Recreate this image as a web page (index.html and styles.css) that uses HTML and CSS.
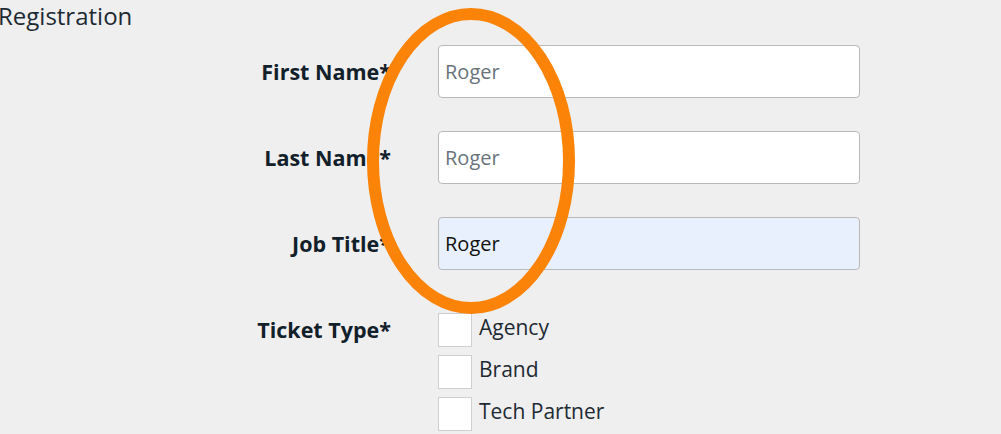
FILE: index.html
```html
<!DOCTYPE html>
<html>
<head>
<meta charset="utf-8">
<link rel="stylesheet" href="styles.css">
</head>
<body>
<div class="page">
  <h1 class="title">Registration</h1>
  <form class="form">
    <label class="label" for="fn">First Name*</label>
    <input id="fn" class="field" type="text" placeholder="Roger">
    <label class="label" for="ln">Last Name*</label>
    <input id="ln" class="field" type="text" placeholder="Roger">
    <label class="label" for="jt">Job Title*</label>
    <input id="jt" class="field autofill" type="text" value="Roger">
    <div class="label ticket-label">Ticket Type*</div>
    <div class="options">
      <div class="option"><span class="box"></span><span class="opt-text">Agency</span></div>
      <div class="option"><span class="box"></span><span class="opt-text">Brand</span></div>
      <div class="option"><span class="box"></span><span class="opt-text">Tech Partner</span></div>
    </div>
  </form>
  <svg class="circle" width="230" height="320" viewBox="0 0 230 320">
    <ellipse cx="104" cy="156" rx="98" ry="147" fill="none" stroke="#fb8307" stroke-width="12"/>
  </svg>
</div>
</body>
</html>
```

FILE: styles.css
```css
html, body {
  margin: 0;
  padding: 0;
  background: #efefef;
}
body {
  font-family: "Open Sans", "Liberation Sans", sans-serif;
  width: 1001px;
  height: 434px;
  overflow: hidden;
}
.page {
  position: relative;
  height: 434px;
}
.title {
  margin: 0 0 0 -2px;
  font-size: 24px;
  font-weight: 400;
  color: #1e2a33;
  line-height: 32px;
  height: 45px;
}
.form {
  display: grid;
  grid-template-columns: 391px 422px;
  column-gap: 47px;
  row-gap: 33px;
  align-items: center;
}
.label {
  text-align: right;
  font-weight: 700;
  font-size: 21.5px;
  color: #12202a;
}
.field {
  box-sizing: border-box;
  width: 422px;
  height: 53px;
  border: 1px solid #b9b9b9;
  border-radius: 4px;
  background: #fff;
  padding: 0 6px;
  font-family: "Open Sans", "Liberation Sans", sans-serif;
  font-size: 20px;
  color: #111;
  outline: none;
}
.field::placeholder {
  color: #68737c;
  opacity: 1;
}
.autofill {
  background: #e8f0fe;
}
.ticket-label {
  align-self: start;
  margin-top: 12px;
  line-height: 30px;
}
.options {
  margin-top: 10px;
  display: flex;
  flex-direction: column;
  gap: 8px;
}
.option {
  display: flex;
  align-items: center;
  gap: 7px;
  height: 34px;
}
.box {
  box-sizing: border-box;
  width: 34px;
  height: 34px;
  background: #fff;
  border: 1px solid #cfcfcf;
}
.opt-text {
  font-size: 21px;
  color: #1e2a33;
  margin-top: -6px;
}
.circle {
  position: absolute;
  left: 367px;
  top: 5px;
}
```
